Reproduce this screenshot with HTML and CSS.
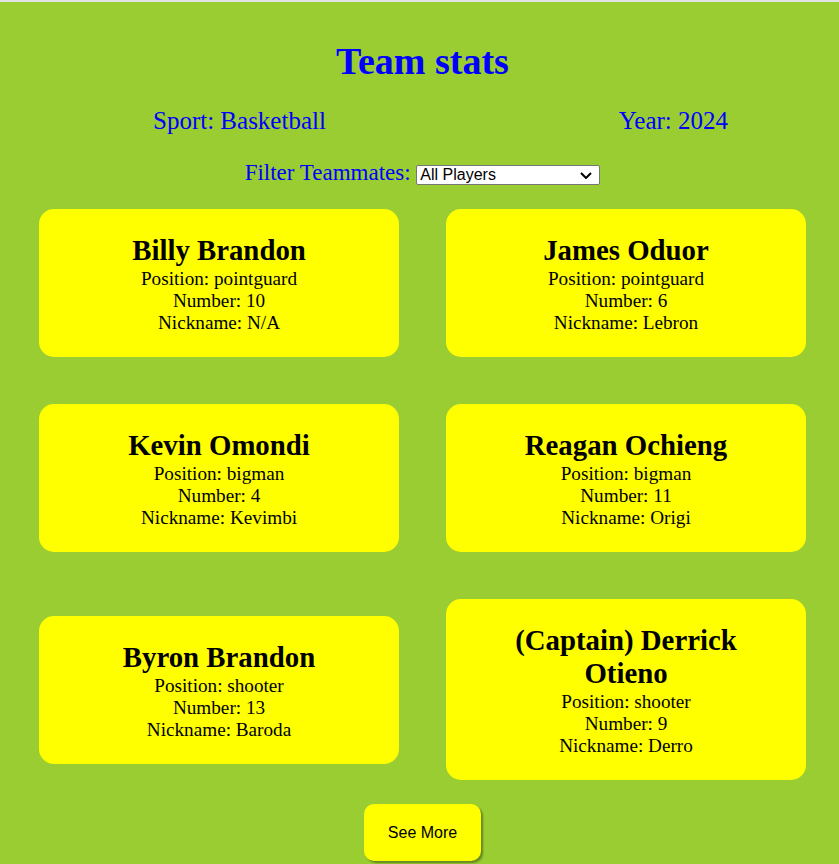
FILE: index.html
```html
<!DOCTYPE html>
<html lang="en">
<head>
<meta charset="utf-8">
<title>Team stats</title>
<link rel="stylesheet" href="styles.css">
</head>
<body>
<div class="page">
  <h1 class="title">Team stats</h1>
  <div class="meta">
    <span>Sport: Basketball</span>
    <span>Year: 2024</span>
  </div>
  <div class="filter">
    <label for="filter">Filter Teammates:</label>
    <select id="filter" class="filter-select">
      <option>All Players</option>
      <option>Point Guards</option>
      <option>Big Men</option>
      <option>Shooters</option>
    </select>
  </div>
  <div class="grid">
    <div class="card">
      <h2 class="card-name">Billy Brandon</h2>
      <p class="card-line">Position: pointguard</p>
      <p class="card-line">Number: 10</p>
      <p class="card-line">Nickname: N/A</p>
    </div>
    <div class="card">
      <h2 class="card-name">James Oduor</h2>
      <p class="card-line">Position: pointguard</p>
      <p class="card-line">Number: 6</p>
      <p class="card-line">Nickname: Lebron</p>
    </div>
    <div class="card">
      <h2 class="card-name">Kevin Omondi</h2>
      <p class="card-line">Position: bigman</p>
      <p class="card-line">Number: 4</p>
      <p class="card-line">Nickname: Kevimbi</p>
    </div>
    <div class="card">
      <h2 class="card-name">Reagan Ochieng</h2>
      <p class="card-line">Position: bigman</p>
      <p class="card-line">Number: 11</p>
      <p class="card-line">Nickname: Origi</p>
    </div>
    <div class="card">
      <h2 class="card-name">Byron Brandon</h2>
      <p class="card-line">Position: shooter</p>
      <p class="card-line">Number: 13</p>
      <p class="card-line">Nickname: Baroda</p>
    </div>
    <div class="card">
      <h2 class="card-name">(Captain) Derrick Otieno</h2>
      <p class="card-line">Position: shooter</p>
      <p class="card-line">Number: 9</p>
      <p class="card-line">Nickname: Derro</p>
    </div>
  </div>
  <div class="actions">
    <button class="more-btn" type="button">See More</button>
  </div>
</div>
</body>
</html>
```

FILE: styles.css
```css
html, body {
  margin: 0;
  padding: 0;
}

body {
  background: #9acd32;
  border-top: 2px solid #e2e2e2;
  font-family: "Liberation Serif", "Times New Roman", serif;
  color: #0000ff;
}

.page {
  padding: 0 33px 40px 39px;
}

.title {
  margin: 37px 0 0;
  text-align: center;
  font-size: 38px;
  font-weight: bold;
}

.meta {
  display: flex;
  justify-content: space-between;
  margin-top: 24px;
  padding: 0 78px 0 114px;
  font-size: 25px;
}

.filter {
  margin-top: 25px;
  text-align: center;
  font-size: 23px;
}

.filter-select {
  -webkit-appearance: none;
  appearance: none;
  width: 184px;
  height: 20px;
  font-family: "Liberation Sans", Arial, sans-serif;
  font-size: 16px;
  line-height: 18px;
  color: #000;
  background-color: #fff;
  background-image: url("data:image/svg+xml;utf8,<svg xmlns='http://www.w3.org/2000/svg' width='12' height='7' viewBox='0 0 12 7'><path d='M1 1l5 5 5-5' fill='none' stroke='black' stroke-width='2'/></svg>");
  background-repeat: no-repeat;
  background-position: right 7px center;
  border: 1px solid #767676;
  border-radius: 2px;
  padding: 0 24px 0 3px;
  vertical-align: baseline;
}

.grid {
  display: grid;
  grid-template-columns: 360px 360px;
  column-gap: 47px;
  row-gap: 47px;
  align-items: center;
  margin-top: 23px;
}

.card {
  background: #ffff00;
  border-radius: 15px;
  padding: 25px 30px 23px;
  text-align: center;
  color: #000;
  font-size: 19.2px;
}

.card-name {
  margin: 0 0 1px;
  font-size: 28.8px;
  line-height: 33px;
  font-weight: bold;
}

.card-line {
  margin: 0;
}

.actions {
  display: flex;
  justify-content: center;
  margin-top: 24px;
}

.more-btn {
  background: #ffff00;
  color: #000;
  border: none;
  border-radius: 10px;
  padding: 20px 24px 19px;
  font-family: "Liberation Sans", Arial, sans-serif;
  font-size: 16px;
  box-shadow: 2px 2px 2px rgba(0, 0, 0, 0.35);
  cursor: pointer;
}
```
